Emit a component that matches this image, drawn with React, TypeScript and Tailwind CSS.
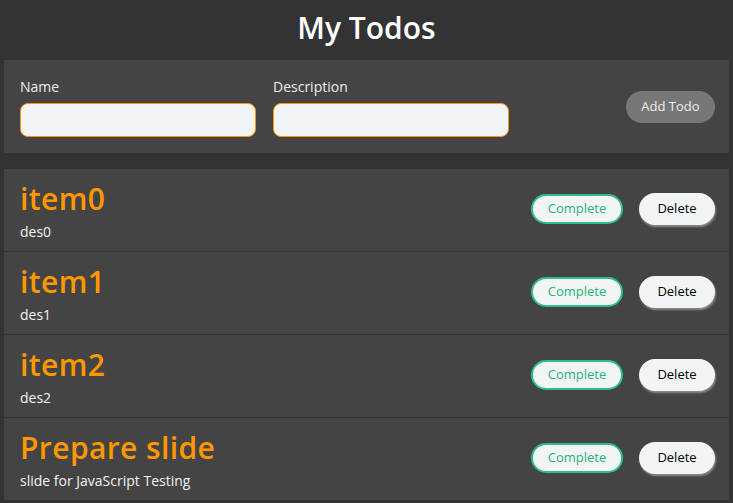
import React from 'react';

interface Todo {
  name: string;
  description: string;
}

const todos: Todo[] = [
  { name: 'item0', description: 'des0' },
  { name: 'item1', description: 'des1' },
  { name: 'item2', description: 'des2' },
  { name: 'Prepare slide', description: 'slide for JavaScript Testing' },
];

function TodoRow({ todo }: { todo: Todo }) {
  return (
    <div className="flex items-center justify-between bg-[#444444] border-b border-[#353535] pl-4 pr-[14px] pt-[4px] pb-[6px]">
      <div className="pt-[8px] pb-[2px]">
        <h2 className="text-[30px] leading-[36px] font-semibold tracking-[0.4px] text-[#ff9800]">{todo.name}</h2>
        <p className="mt-[4px] text-[14px] leading-[22px] text-[#f2f2f2]">{todo.description}</p>
      </div>
      <div className="flex items-center gap-4">
        <button className="w-[92px] h-[30px] rounded-full border-2 border-[#2ec08a] bg-[#f3f4f6] text-[13px] text-[#1db57a]">
          Complete
        </button>
        <button className="w-[76px] h-[32px] rounded-full bg-[#f3f4f6] text-[13px] text-black shadow-[1px_2px_2px_#8a8a8a]">
          Delete
        </button>
      </div>
    </div>
  );
}

export default function App() {
  return (
    <div
      className="min-h-[503px] bg-[#333333] pb-1"
      style={{ fontFamily: '"Open Sans", "Noto Sans", sans-serif' }}
    >
      <header className="h-[60px] flex items-center justify-center">
        <h1 className="text-[30px] font-semibold text-white leading-none -mt-[4px]">My Todos</h1>
      </header>

      <div className="mx-1 bg-[#444444] flex items-center justify-between pl-4 pr-[14px] pt-[16px] pb-[16px]">
        <div className="flex gap-[17px]">
          <label className="flex flex-col">
            <span className="text-[14px] leading-[22px] text-[#eeeeee] mb-[5px]">Name</span>
            <input className="w-[236px] h-[34px] rounded-[8px] border border-[#ff9800] bg-[#f3f4f6] px-2 outline-none" />
          </label>
          <label className="flex flex-col">
            <span className="text-[14px] leading-[22px] text-[#eeeeee] mb-[5px]">Description</span>
            <input className="w-[236px] h-[34px] rounded-[8px] border border-[#ff9800] bg-[#f3f4f6] px-2 outline-none" />
          </label>
        </div>
        <button className="w-[89px] h-[32px] rounded-full bg-[#777777] text-[13px] text-[#eeeeee]">
          Add Todo
        </button>
      </div>

      <div className="mx-1 mt-4">
        {todos.map((todo) => (
          <TodoRow key={todo.name} todo={todo} />
        ))}
      </div>
    </div>
  );
}
